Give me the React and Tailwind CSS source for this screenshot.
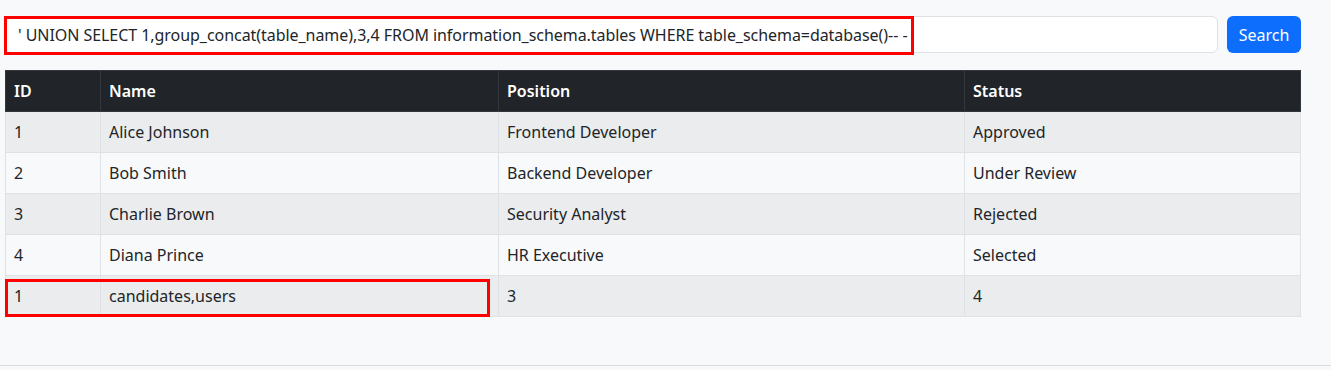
const rows = [
  ['1', 'Alice Johnson', 'Frontend Developer', 'Approved'],
  ['2', 'Bob Smith', 'Backend Developer', 'Under Review'],
  ['3', 'Charlie Brown', 'Security Analyst', 'Rejected'],
  ['4', 'Diana Prince', 'HR Executive', 'Selected'],
  ['1', 'candidates,users', '3', '4'],
];

export default function App() {
  return (
    <div className="h-[370px] bg-[#f8f9fa] text-[#212529] text-base flex flex-col" style={{ fontFamily: '"Noto Sans", sans-serif' }}>
      <div className="px-[5px] pt-4 w-[1306px] flex-1">
        <div className="flex gap-[9px] relative">
          <input
            readOnly
            value="' UNION SELECT 1,group_concat(table_name),3,4 FROM information_schema.tables WHERE table_schema=database()-- -"
            className="flex-1 h-[37px] px-3 bg-white border border-[#dee2e6] rounded-md text-[#212529] tracking-[-0.05px] outline-none"
          />
          <button type="button" className="h-[37px] w-[74px] bg-[#0d6efd] text-white rounded-md">
            Search
          </button>
          <div className="absolute left-[-1px] top-0 w-[910px] h-[39px] border-[3px] border-[#ff0000] pointer-events-none" />
        </div>

        <div className="relative mt-[17px]">
          <table className="w-full border-collapse text-left">
            <thead>
              <tr className="bg-[#212529] text-white font-semibold">
                <th className="w-[95px] px-2 py-2 border border-[#32383e] font-semibold">ID</th>
                <th className="w-[398px] px-2 py-2 border border-[#32383e] font-semibold">Name</th>
                <th className="w-[466px] px-2 py-2 border border-[#32383e] font-semibold">Position</th>
                <th className="px-2 py-2 border border-[#32383e] font-semibold">Status</th>
              </tr>
            </thead>
            <tbody>
              {rows.map((r, i) => (
                <tr key={i} className={i % 2 === 0 ? 'bg-[#ebeced]' : 'bg-[#f8f9fa]'}>
                  {r.map((c, j) => (
                    <td key={j} className="px-2 py-2 border border-[#dee2e6] leading-6">
                      {c}
                    </td>
                  ))}
                </tr>
              ))}
            </tbody>
          </table>
          <div className="absolute left-0 top-[209px] w-[485px] h-[38px] border-[3px] border-[#ff0000] pointer-events-none" />
        </div>
      </div>
      <div className="h-[5px] border-t border-[#dcdcdc] bg-[#f8f9fa]" />
    </div>
  );
}
